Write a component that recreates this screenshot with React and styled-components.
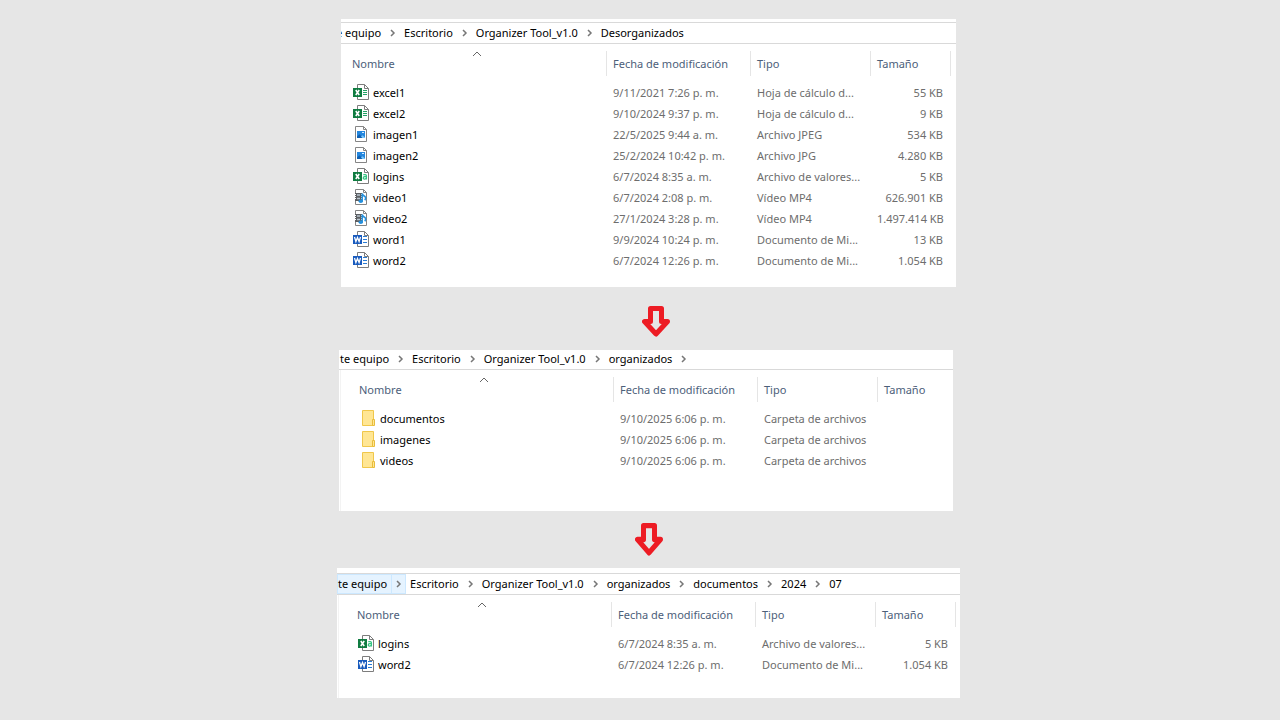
import React from 'react';
import styled, { createGlobalStyle } from 'styled-components';

const GlobalStyle = createGlobalStyle`
  *, *::before, *::after { box-sizing: border-box; }
  body { margin: 0; background: #e6e6e6; }
`;

const Page = styled.main`
  max-width: 640px;
  margin: 0 auto;
  padding: 19px 0 22px 17px;
  font-family: "Segoe UI", "Noto Sans", sans-serif;
  font-size: 11px;
  line-height: 20px;
  color: #000;
`;

const Window = styled.section`
  background: #fff;
  overflow: hidden;
  margin: 0 ${(p) => p.$right}px 0 ${(p) => p.$left}px;
  padding-top: ${(p) => p.$top}px;
`;

const CrumbBar = styled.nav`
  border-top: ${(p) => (p.$framed ? '1px solid #d9d9d9' : 'none')};
  border-bottom: 1px solid #d9d9d9;
  height: ${(p) => (p.$framed ? 22 : 20)}px;
  line-height: ${(p) => (p.$framed ? 20 : 18)}px;
  overflow: hidden;
`;

const CrumbList = styled.ol`
  display: flex;
  list-style: none;
  margin: 0 0 0 ${(p) => -p.$scrolled}px;
  padding: 0;
`;

const CrumbLink = styled.a`
  padding: 0 4px;
  color: inherit;
  text-decoration: none;
  white-space: nowrap;
`;

const CrumbArrow = styled.button`
  display: flex;
  align-items: center;
  justify-content: center;
  width: 15px;
  padding: 0;
  border: 0;
  border-left: 1px solid ${(p) => (p.$hot ? '#cce8ff' : 'transparent')};
  background: none;
`;

const Crumb = styled.li`
  display: flex;
  flex: none;
  background: ${(p) => (p.$hot ? '#e5f3ff' : 'none')};
  box-shadow: ${(p) => (p.$hot ? 'inset 0 0 0 1px #cce8ff' : 'none')};

  &:first-child ${CrumbLink} {
    padding-left: 1px;
  }
`;

const Listing = styled.div`
  margin-left: ${(p) => (p.$edge ? 1 : 0)}px;
  border-left: ${(p) => (p.$edge ? '1px solid #f3f3f3' : 'none')};
  padding: 7px ${(p) => p.$right}px ${(p) => p.$bottom}px 0;
`;

const Table = styled.table`
  width: 100%;
  table-layout: fixed;
  border-collapse: separate;
  border-spacing: 0;
`;

const Col = styled.col`
  width: ${(p) => (p.$width ? `${p.$width}px` : 'auto')};
`;

const HeadCell = styled.th`
  height: 25px;
  padding: 0 0 0 ${(p) => p.$inset || 0}px;
  border-right: ${(p) => (p.$open ? 'none' : '1px solid #e5e5e5')};
  font-weight: 400;
  text-align: left;
`;

const SortButton = styled.button`
  position: relative;
  display: block;
  width: 100%;
  height: 25px;
  padding: 0 0 0 ${(p) => p.$pad}px;
  border: 0;
  background: none;
  color: #4c607a;
  font: inherit;
  text-align: left;
  white-space: nowrap;
`;

const SortMark = styled.svg`
  position: absolute;
  top: 0;
  left: calc(50% - 5px);
`;

const Body = styled.tbody`
  &::before {
    content: "";
    display: block;
    height: 6px;
  }
`;

const Cell = styled.td`
  height: 21px;
  padding: 0 8px 0 6px;
  color: #6d6d6d;
  text-align: ${(p) => (p.$end ? 'right' : 'left')};
  white-space: nowrap;
`;

const NameCell = styled.td`
  height: 21px;
  padding: 0 0 0 ${(p) => p.$inset + 6}px;
`;

const FileName = styled.div`
  display: flex;
  align-items: center;
  gap: 4px;
  height: 21px;
  line-height: 21px;
`;

const IconSvg = styled.svg`
  flex: none;
  margin-bottom: 1px;
`;

const ArrowRow = styled.div`
  display: flex;
  justify-content: center;
  padding: ${(p) => p.$pad};
`;

const Sheet = () => (
  <path d="M4.5 .5 H11.5 L15.5 4.5 V15.5 H4.5 Z M11.5 .5 V4.5 H15.5" fill="#fff" stroke="#7d7d7d" />
);

const PhotoSheet = () => (
  <path d="M2.5 .5 H10.5 L13.5 3.5 V15.5 H2.5 Z M10.5 .5 V3.5 H13.5" fill="#fff" stroke="#858585" />
);

const ExcelBadge = () => (
  <>
    <rect x="0" y="4" width="9" height="9" fill="#107c41" />
    <path d="M2.8 6 L6.2 11 M6.2 6 L2.8 11" stroke="#fff" strokeWidth="1.6" />
  </>
);

const icons = {
  excel: (
    <>
      <Sheet />
      <path d="M10 6.5h4M10 8.5h4M10 10.5h4" stroke="#21a366" />
      <ExcelBadge />
    </>
  ),
  csv: (
    <>
      <Sheet />
      <path d="M10.3 6.6H12.3Q13.4 6.6 13.4 7.8V11.6M13.4 8.7H11.6Q10.3 8.8 10.3 10T11.6 11.1Q13 11 13.4 10" fill="none" stroke="#33c481" strokeWidth="1.3" />
      <ExcelBadge />
    </>
  ),
  word: (
    <>
      <Sheet />
      <path d="M10 5.5h4M10 8.5h4M10 11.5h4" stroke="#2b7cd3" />
      <rect x="0" y="4" width="9" height="9" fill="#185abd" />
      <path d="M1.5 6 L2.9 10.6 L4.5 6.6 L6.1 10.6 L7.5 6" fill="none" stroke="#fff" strokeWidth="1.3" />
    </>
  ),
  image: (
    <>
      <PhotoSheet />
      <rect x="4" y="5" width="8" height="7" fill="#2487de" />
      <path d="M4 12 V10.5 L6.5 8.2 L10 12Z" fill="#0f5fb0" />
      <path d="M8 10.5 L9.5 9.3 L12 11.5 V12 H9.5Z" fill="#7cc8fa" />
      <rect x="9" y="6" width="2" height="1" fill="#d4edff" />
    </>
  ),
  video: (
    <>
      <PhotoSheet />
      <rect x="2" y="4" width="7" height="8" fill="#5c5f63" />
      <path d="M2 5.5h1M2 7.5h1M2 9.5h1M8 5.5h1M8 7.5h1M8 9.5h1" stroke="#fff" />
      <path d="M4 6h3M4 9.5h3" stroke="#b9c6d0" strokeWidth="1.6" />
      <path d="M9.2 12.5V4.5Q9.8 6.5 12 7.5Q13.4 9 11.8 11.2" fill="none" stroke="#2490dd" strokeWidth="1.5" />
      <ellipse cx="7.8" cy="12.3" rx="2.2" ry="1.8" fill="#2490dd" />
    </>
  ),
  folder: (
    <>
      <path d="M2.5 .5 H13.5 V15.5 H2.5 Z" fill="#ffe694" stroke="#f0c74a" />
      <path d="M12.5 9.5 H14.5 V15.5 H12.5 Z" fill="#ffe694" stroke="#e8bd3c" />
    </>
  ),
};

const FileIcon = ({ kind }) => (
  <IconSvg width="16" height="16" viewBox="0 0 16 16" aria-hidden="true">{icons[kind]}</IconSvg>
);

const DownArrow = ({ height }) => (
  <svg width="28" height={height} viewBox="0 0 28 31" preserveAspectRatio="none" aria-hidden="true">
    <path d="M8.5 2.5 H19.5 V15.5 H25.5 L14 28 L2.5 15.5 H8.5 Z" fill="none" stroke="#ed1c24" strokeWidth="5" strokeLinejoin="round" />
  </svg>
);

const Explorer = ({ crumbs, files, scrolled = 0, hot, trailing, framed = true, top = 0, left, right, edge, inset, listRight, bottom, lastWidth = 80 }) => (
  <Window $left={left} $right={right} $top={top}>
    <CrumbBar $framed={framed} aria-label="Ruta">
      <CrumbList $scrolled={scrolled}>
        {crumbs.map((name, i) => (
          <Crumb key={name} $hot={hot === i}>
            <CrumbLink href="#">{name}</CrumbLink>
            {(i < crumbs.length - 1 || trailing) && (
              <CrumbArrow $hot={hot === i} aria-label={`Abrir ${name}`}>
                <svg width="6" height="8" viewBox="0 0 6 8"><path d="M1 1 L4 4 L1 7" fill="none" stroke="#777" strokeWidth="1.5" /></svg>
              </CrumbArrow>
            )}
          </Crumb>
        ))}
      </CrumbList>
    </CrumbBar>
    <Listing $edge={edge} $right={listRight} $bottom={bottom}>
      <Table>
        <colgroup>
          <Col />
          <Col $width={144} />
          <Col $width={120} />
          <Col $width={lastWidth} />
        </colgroup>
        <thead>
          <tr>
            <HeadCell $inset={inset}>
              <SortButton $pad={5}>
                Nombre
                <SortMark width="10" height="6" viewBox="0 0 10 6"><path d="M1 5 L5 1 L9 5" fill="none" stroke="#666" /></SortMark>
              </SortButton>
            </HeadCell>
            <HeadCell><SortButton $pad={6}>Fecha de modificación</SortButton></HeadCell>
            <HeadCell><SortButton $pad={6}>Tipo</SortButton></HeadCell>
            <HeadCell $open={lastWidth < 80}><SortButton $pad={6}>Tamaño</SortButton></HeadCell>
          </tr>
        </thead>
        <Body>
          {files.map(([kind, name, date, type, weight]) => (
            <tr key={name}>
              <NameCell $inset={inset}><FileName><FileIcon kind={kind} />{name}</FileName></NameCell>
              <Cell>{date}</Cell>
              <Cell>{type}</Cell>
              <Cell $end>{weight}</Cell>
            </tr>
          ))}
        </Body>
      </Table>
    </Listing>
  </Window>
);

const messy = [
  ['excel', 'excel1', '9/11/2021 7:26 p. m.', 'Hoja de cálculo d...', '55 KB'],
  ['excel', 'excel2', '9/10/2024 9:37 p. m.', 'Hoja de cálculo d...', '9 KB'],
  ['image', 'imagen1', '22/5/2025 9:44 a. m.', 'Archivo JPEG', '534 KB'],
  ['image', 'imagen2', '25/2/2024 10:42 p. m.', 'Archivo JPG', '4.280 KB'],
  ['csv', 'logins', '6/7/2024 8:35 a. m.', 'Archivo de valores...', '5 KB'],
  ['video', 'video1', '6/7/2024 2:08 p. m.', 'Vídeo MP4', '626.901 KB'],
  ['video', 'video2', '27/1/2024 3:28 p. m.', 'Vídeo MP4', '1.497.414 KB'],
  ['word', 'word1', '9/9/2024 10:24 p. m.', 'Documento de Mi...', '13 KB'],
  ['word', 'word2', '6/7/2024 12:26 p. m.', 'Documento de Mi...', '1.054 KB'],
];

const folders = ['documentos', 'imagenes', 'videos'].map((name) => [
  'folder', name, '9/10/2025 6:06 p. m.', 'Carpeta de archivos', '',
]);

const july = [messy[4], messy[8]];

export default function App() {
  return (
    <>
      <GlobalStyle />
      <Page>
        <Explorer left={4} right={4} top={3} scrolled={6} inset={6} listRight={5} bottom={16}
          crumbs={['e equipo', 'Escritorio', 'Organizer Tool_v1.0', 'Desorganizados']} files={messy} />
        <ArrowRow $pad="19px 0 13px 15px"><DownArrow height={31} /></ArrowRow>
        <Explorer left={2} right={7} framed={false} trailing edge inset={13} listRight={0} bottom={40} lastWidth={75}
          crumbs={['te equipo', 'Escritorio', 'Organizer Tool_v1.0', 'organizados']} files={folders} />
        <ArrowRow $pad="12px 0 12px 1px"><DownArrow height={33} /></ArrowRow>
        <Explorer left={0} right={0} top={5} hot={0} edge inset={13} listRight={4} bottom={23}
          crumbs={['te equipo', 'Escritorio', 'Organizer Tool_v1.0', 'organizados', 'documentos', '2024', '07']} files={july} />
      </Page>
    </>
  );
}
